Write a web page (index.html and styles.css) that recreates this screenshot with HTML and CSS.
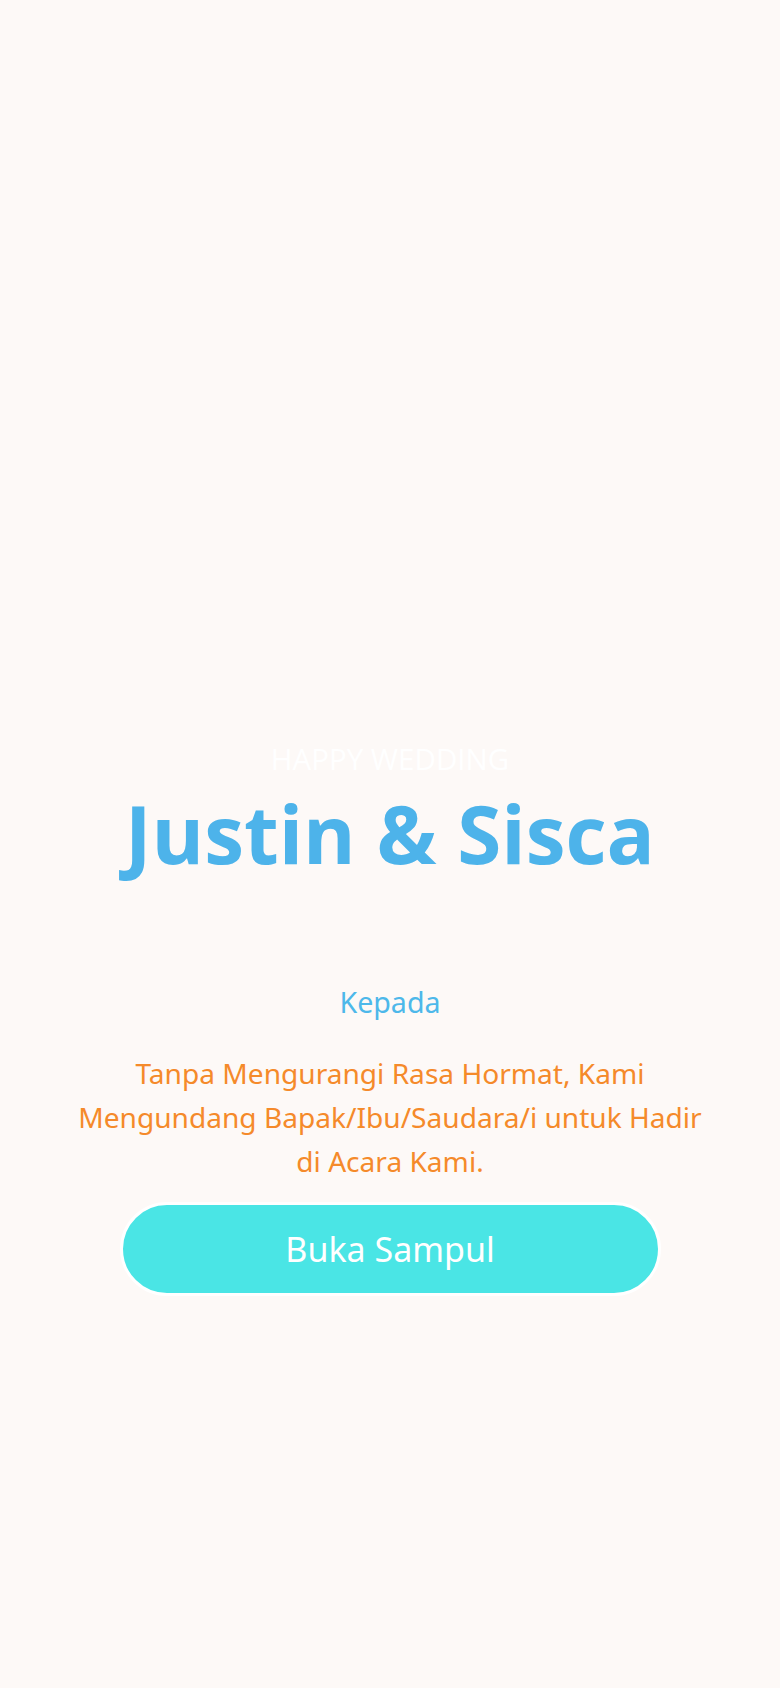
FILE: index.html
```html
<!DOCTYPE html>
<html lang="id">
<head>
<meta charset="utf-8">
<title>Justin &amp; Sisca</title>
<link rel="stylesheet" href="styles.css">
</head>
<body>
<main class="cover">
  <p class="eyebrow">HAPPY WEDDING</p>
  <h1 class="names">Justin &amp; Sisca</h1>
  <p class="to">Kepada</p>
  <p class="message">Tanpa Mengurangi Rasa Hormat, Kami Mengundang Bapak/Ibu/Saudara/i untuk Hadir di Acara Kami.</p>
  <button class="open-btn" type="button">Buka Sampul</button>
</main>
</body>
</html>
```
FILE: styles.css
```css
html, body {
  margin: 0;
  padding: 0;
  background: #fdf9f7;
}
.cover {
  min-height: 1688px;
  box-sizing: border-box;
  display: flex;
  flex-direction: column;
  align-items: center;
  text-align: center;
  padding-top: 739px;
}
.eyebrow {
  margin: 0;
  font-family: "Open Sans", sans-serif;
  font-size: 29.5px;
  line-height: 40px;
  color: #ffffff;
}
.names {
  margin: 1px 0 0;
  font-family: "Open Sans", sans-serif;
  font-weight: 700;
  font-size: 80px;
  line-height: 106px;
  color: #4db3ea;
}
.to {
  margin: 98px 0 0;
  font-family: "Noto Sans", sans-serif;
  font-size: 28.6px;
  line-height: 36px;
  color: #4db8ea;
}
.message {
  margin: 31px 0 0;
  max-width: 650px;
  font-family: "Noto Sans", sans-serif;
  font-size: 28.1px;
  line-height: 44px;
  color: #f58a2a;
}
.open-btn {
  margin-top: 19px;
  width: 541px;
  height: 94px;
  border: 3px solid #ffffff;
  border-radius: 47px;
  background: #4ae5e5;
  color: #ffffff;
  font-family: "Noto Sans", sans-serif;
  font-size: 34px;
  cursor: pointer;
}
```
